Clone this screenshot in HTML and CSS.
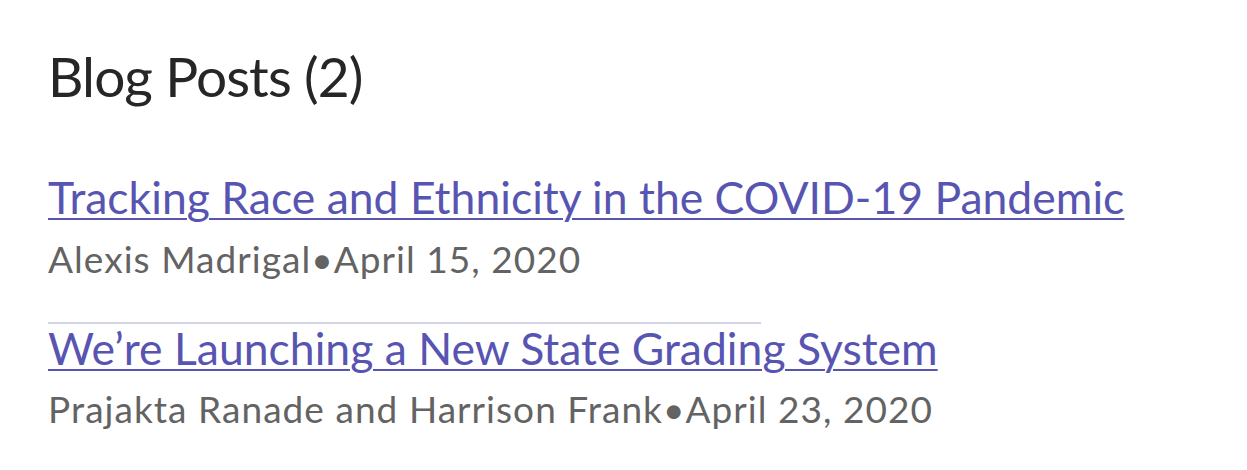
FILE: index.html
```html
<!DOCTYPE html>
<html>
<head>
<meta charset="utf-8">
<link rel="stylesheet" href="styles.css">
</head>
<body>
<main class="page">
  <h2 class="heading">Blog Posts (2)</h2>
  <ul class="posts">
    <li class="post">
      <a class="post-title" href="#">Tracking Race and Ethnicity in the COVID-19 Pandemic</a>
      <p class="meta">Alexis Madrigal•April 15, 2020</p>
    </li>
    <li class="post">
      <a class="post-title" href="#">We’re Launching a New State Grading System</a>
      <p class="meta">Prajakta Ranade and Harrison Frank•April 23, 2020</p>
    </li>
  </ul>
</main>
</body>
</html>
```
FILE: styles.css
```css
html, body {
  margin: 0;
  padding: 0;
  background: #ffffff;
}
body {
  font-family: Lato, "Noto Sans", sans-serif;
}
.page {
  padding: 43px 48px 0 48px;
}
.heading {
  margin: 0;
  font-weight: 400;
  font-size: 55px;
  line-height: 66px;
  letter-spacing: -0.9px;
  color: #262626;
}
.posts {
  list-style: none;
  margin: 64px 0 0 0;
  padding: 0;
}
.post {
  display: flex;
  flex-direction: column;
  align-items: flex-start;
}
.post + .post {
  border-top: 2px solid #d3d3e8;
  width: 713px;
  padding-top: 0;
  margin-top: 43px;
}
.post-title {
  font-size: 44.5px;
  line-height: 48px;
  color: #5855b2;
  text-decoration: underline;
  text-decoration-thickness: 2px;
  text-underline-offset: 4px;
  white-space: nowrap;
}
.meta {
  margin: 17.5px 0 0 0;
  font-size: 37px;
  line-height: 40px;
  letter-spacing: 1.05px;
  color: #636363;
  white-space: nowrap;
}
```
